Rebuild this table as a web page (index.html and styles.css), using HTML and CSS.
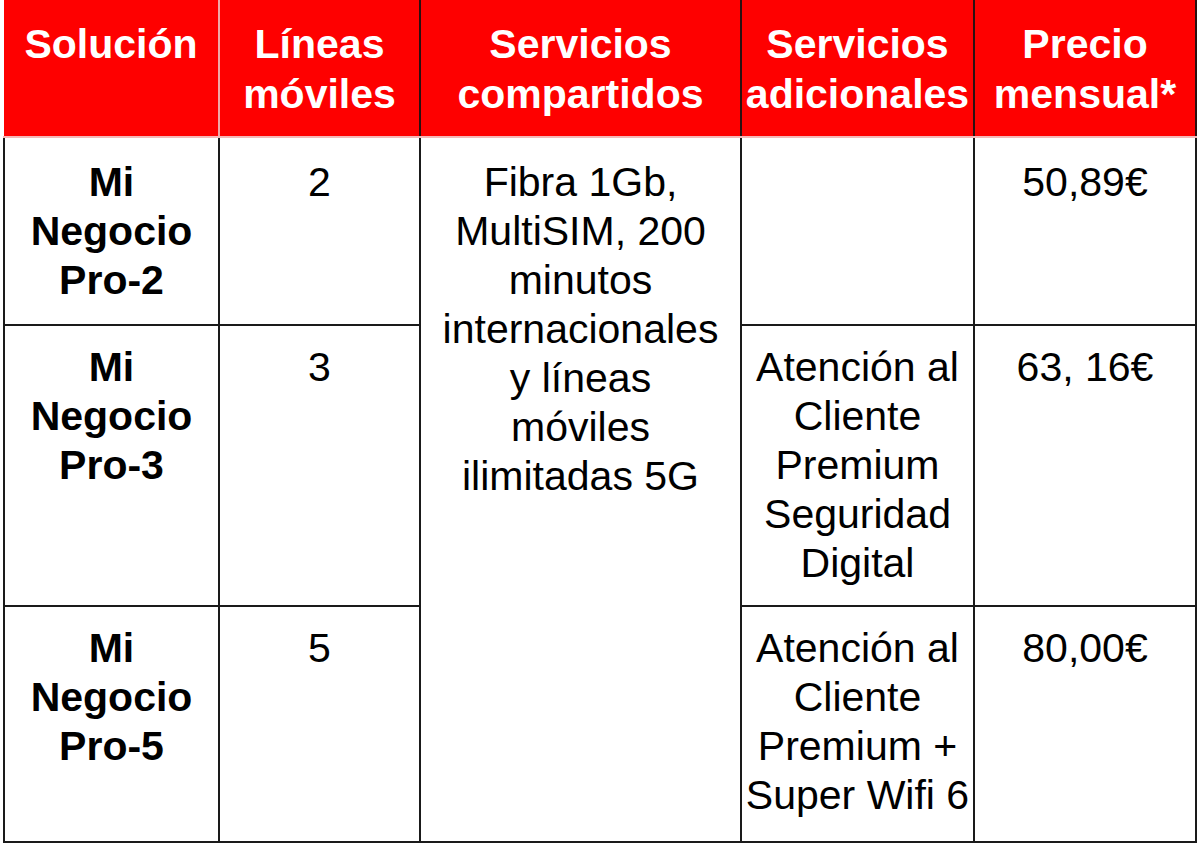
FILE: index.html
```html
<!DOCTYPE html>
<html lang="es">
<head>
<meta charset="utf-8">
<title>Mi Negocio Pro</title>
<link rel="stylesheet" href="styles.css">
</head>
<body>
<table class="plans">
  <colgroup>
    <col class="c1"><col class="c2"><col class="c3"><col class="c4"><col class="c5">
  </colgroup>
  <thead>
    <tr class="head">
      <th class="first">Solución</th>
      <th>Líneas<br>móviles</th>
      <th>Servicios<br>compartidos</th>
      <th>Servicios<br>adicionales</th>
      <th>Precio<br>mensual*</th>
    </tr>
  </thead>
  <tbody>
    <tr class="r1">
      <td class="name">Mi<br>Negocio<br>Pro-2</td>
      <td>2</td>
      <td rowspan="3">Fibra 1Gb,<br>MultiSIM, 200<br>minutos<br>internacionales<br>y líneas<br>móviles<br>ilimitadas 5G</td>
      <td></td>
      <td>50,89€</td>
    </tr>
    <tr class="r2">
      <td class="name">Mi<br>Negocio<br>Pro-3</td>
      <td>3</td>
      <td>Atención al<br>Cliente<br>Premium<br>Seguridad<br>Digital</td>
      <td>63, 16€</td>
    </tr>
    <tr class="r3">
      <td class="name">Mi<br>Negocio<br>Pro-5</td>
      <td>5</td>
      <td>Atención al<br>Cliente<br>Premium +<br>Super Wifi 6</td>
      <td>80,00€</td>
    </tr>
  </tbody>
</table>
</body>
</html>
```

FILE: styles.css
```css
html, body {
  margin: 0;
  padding: 0;
  background: #ffffff;
}

body {
  font-family: "Liberation Sans", Arial, sans-serif;
}

.plans {
  margin-left: 3px;
  width: 1192px;
  table-layout: fixed;
  border-collapse: collapse;
  font-size: 41px;
  line-height: 49px;
  color: #000;
}

.c1 { width: 215px; }
.c2 { width: 201px; }
.c3 { width: 321px; }
.c4 { width: 233px; }
.c5 { width: 222px; }

.plans th,
.plans td {
  text-align: center;
  vertical-align: top;
  padding: 20px 1px 0 1px;
  white-space: nowrap;
  overflow: visible;
}

.head {
  height: 137px;
}

.plans th {
  background: #fe0000;
  color: #ffffff;
  font-weight: bold;
  line-height: 50px;
  padding-top: 19px;
  border-left: 2px solid #2a1010;
  border-right: 2px solid #2a1010;
  border-bottom: 2px solid #f4b8b8;
  border-top: none;
}

.plans th.first {
  border-left: none;
  border-right: 2px solid #f0a8a8;
}

.plans td {
  border: 2px solid #1a1a1a;
  background: #ffffff;
}

.plans td.name {
  font-weight: bold;
}

.r2 td,
.r3 td {
  padding-top: 17px;
}

.r1 { height: 188px; }
.r2 { height: 281px; }
.r3 { height: 236px; }
```
